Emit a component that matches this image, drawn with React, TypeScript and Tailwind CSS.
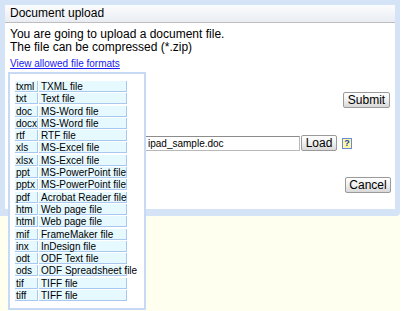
const formats: [string, string][] = [
  ["txml", "TXML file"],
  ["txt", "Text file"],
  ["doc", "MS-Word file"],
  ["docx", "MS-Word file"],
  ["rtf", "RTF file"],
  ["xls", "MS-Excel file"],
  ["xlsx", "MS-Excel file"],
  ["ppt", "MS-PowerPoint file"],
  ["pptx", "MS-PowerPoint file"],
  ["pdf", "Acrobat Reader file"],
  ["htm", "Web page file"],
  ["html", "Web page file"],
  ["mif", "FrameMaker file"],
  ["inx", "InDesign file"],
  ["odt", "ODF Text file"],
  ["ods", "ODF Spreadsheet file"],
  ["tif", "TIFF file"],
  ["tiff", "TIFF file"],
];

const MacButton = ({ label, className = "" }: { label: string; className?: string }) => (
  <button
    type="button"
    className={`h-[16px] border border-[#9a9a9a] rounded-[2px] bg-gradient-to-b from-[#ffffff] via-[#f0f0f0] to-[#d8d8d8] text-[12px] leading-[14px] text-black ${className}`}
  >
    {label}
  </button>
);

export default function App() {
  return (
    <div className="relative w-[403px] h-[311px] bg-white flex flex-col font-['Liberation_Sans',Arial,sans-serif] text-black overflow-hidden">
      {/* dialog frame */}
      <div className="w-[400px] h-[216px] bg-[#d4e3f5] rounded-br-[4px] pt-[5px] px-[5px] pb-[7px]">
        <div className="h-full bg-white flex flex-col">
          <div className="h-[18px] border-b border-[#bdbdbd] bg-gradient-to-b from-[#fbfcfd] to-[#e9edf3] pl-[5px] text-[12px] leading-[17px]">
            Document upload
          </div>
          <div className="flex-1 pl-[5px] pr-[5px] pt-[5px] flex flex-col">
            <p className="text-[12px] leading-[13px]">
              You are going to upload a document file.
              <br />
              The file can be compressed (*.zip)
            </p>
            <a href="#" className="mt-[4px] text-[10px] leading-[12px] text-[#1a1aee] underline w-fit">
              View allowed file formats
            </a>
            <div className="flex justify-end mt-[22px]">
              <MacButton label="Submit" className="w-[47px]" />
            </div>
            <div className="flex items-center justify-end mt-[27px] pr-[38px] gap-[1px]">
              <div className="w-[210px] h-[15px] border border-[#b8b8b8] border-t-[#8c8c8c] bg-white text-[10px] leading-[13px] pl-[57px] overflow-hidden whitespace-nowrap">
                ipad_sample.doc
              </div>
              <MacButton label="Load" className="w-[36px]" />
              <span className="ml-[4px] w-[10px] h-[11px] bg-[#fff8a0] border border-[#6a8ad8] text-[#2040b0] text-[9px] leading-[9px] font-bold flex items-center justify-center">
                ?
              </span>
            </div>
            <div className="flex justify-end mt-[26px] -mr-[1px]">
              <MacButton label="Cancel" className="w-[46px]" />
            </div>
          </div>
        </div>
      </div>
      <div className="w-[400px] flex-1 bg-[#fffff0]" />

      {/* allowed formats popup */}
      <div className="absolute left-[8px] top-[72px] w-[138px] h-[238px] border-2 border-[#c6daf6] bg-white pl-[5px] pt-[7px]">
        <div className="grid grid-cols-[23px_88px] gap-x-[1px] gap-y-[1.3px]">
          {formats.map(([ext, name]) => (
            <div key={ext} className="contents">
              <div className="h-[11px] bg-[#e6f9ff] border-r border-b border-[#a9c7ef] text-[10px] leading-[11px] pl-[1px]">
                {ext}
              </div>
              <div className="h-[11px] bg-[#e6f9ff] border-r border-b border-[#a9c7ef] text-[10px] leading-[11px] pl-[2px] whitespace-nowrap">
                {name}
              </div>
            </div>
          ))}
        </div>
      </div>
    </div>
  );
}
